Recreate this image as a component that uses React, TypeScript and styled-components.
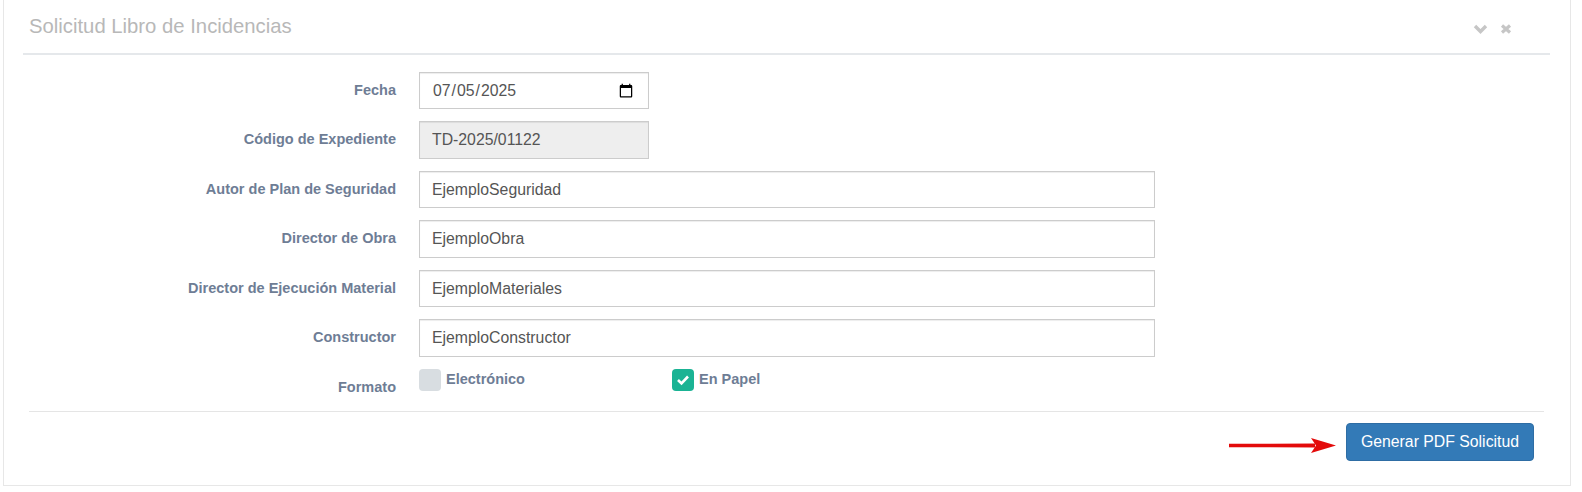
import React from "react";
import styled, { createGlobalStyle } from "styled-components";

const GlobalStyle = createGlobalStyle`
  body {
    margin: 0;
    background: #ffffff;
    font-family: "Liberation Sans", Arial, sans-serif;
  }
`;

const Panel = styled.section`
  box-sizing: border-box;
  width: 1568px;
  margin-left: 3px;
  padding: 0 20px 24px 19px;
  border: 1px solid #e7e7e7;
  border-top: none;
  background: #ffffff;
`;

const Header = styled.div`
  box-sizing: border-box;
  display: flex;
  justify-content: space-between;
  align-items: flex-start;
  height: 55px;
  padding: 15px 38px 0 6px;
  border-bottom: 2px solid #e5e8eb;
`;

const Title = styled.h5`
  margin: 0;
  font-size: 20.3px;
  font-weight: normal;
  color: #b8b8b8;
`;

const Tools = styled.div`
  display: flex;
  align-items: center;
  gap: 12px;
  margin-top: 9px;
`;

const Form = styled.div`
  display: flex;
  flex-direction: column;
  gap: 12.1px;
  margin-top: 17px;
`;

const Row = styled.div`
  display: grid;
  grid-template-columns: 373px 1fr;
  column-gap: 23px;
`;

const Label = styled.label`
  padding-top: 7.7px;
  text-align: right;
  font-size: 14.5px;
  line-height: 20.4px;
  font-weight: bold;
  color: #6e7d95;
`;

const Input = styled.input<{ $wide?: boolean }>`
  box-sizing: border-box;
  width: ${(p) => (p.$wide ? "736px" : "230px")};
  height: 37.4px;
  padding: 0 12px;
  border: 1px solid #cccccc;
  border-radius: 0;
  box-shadow: inset 0 1px 1px rgba(0, 0, 0, 0.075);
  font-family: "Liberation Sans", Arial, sans-serif;
  font-size: 15.8px;
  color: #555555;
  background: ${(p) => (p.readOnly ? "#eeeeee" : "#ffffff")};
  outline: none;
`;

const Options = styled.div`
  display: grid;
  grid-template-columns: 253px 253px;
`;

const Option = styled.div`
  display: flex;
  align-items: flex-start;
  gap: 5px;
`;

const Box = styled.span<{ $checked?: boolean }>`
  display: flex;
  align-items: center;
  justify-content: center;
  width: 22px;
  height: 22px;
  border-radius: 4px;
  background: ${(p) => (p.$checked ? "#1ab394" : "#d8dde1")};
`;

const OptionText = styled.span`
  font-size: 14.5px;
  line-height: 20.4px;
  font-weight: bold;
  color: #6e7d95;
`;

const Separator = styled.hr`
  margin: 14px 6px 0 6px;
  border: none;
  border-top: 1px solid #e5e5e5;
`;

const Footer = styled.div`
  display: flex;
  justify-content: flex-end;
  align-items: center;
  gap: 10px;
  margin-top: 11px;
  padding-right: 16px;
`;

const Arrow = styled.svg`
  margin-top: 7px;
`;

const Button = styled.button`
  box-sizing: border-box;
  height: 38px;
  padding: 0 14px;
  border: 1px solid #2e6da4;
  border-radius: 4px;
  background: #337ab7;
  color: #ffffff;
  font-family: "Liberation Sans", Arial, sans-serif;
  font-size: 15.8px;
  cursor: pointer;
`;

const fields = [
  { label: "Autor de Plan de Seguridad", value: "EjemploSeguridad" },
  { label: "Director de Obra", value: "EjemploObra" },
  { label: "Director de Ejecución Material", value: "EjemploMateriales" },
  { label: "Constructor", value: "EjemploConstructor" },
];

function App() {
  return (
    <>
      <GlobalStyle />
      <Panel>
        <Header>
          <Title>Solicitud Libro de Incidencias</Title>
          <Tools>
            <svg width="15" height="10" viewBox="0 0 15 10">
              <polyline points="2,2 7.5,7.5 13,2" fill="none" stroke="#c6c6c6" strokeWidth="3.4" />
            </svg>
            <svg width="12" height="10" viewBox="0 0 12 10">
              <path d="M2 1.5 L10 8.5 M10 1.5 L2 8.5" stroke="#c6c6c6" strokeWidth="3.2" />
            </svg>
          </Tools>
        </Header>

        <Form>
          <Row>
            <Label>Fecha</Label>
            <div>
              <Input type="date" defaultValue="2025-07-05" />
            </div>
          </Row>
          <Row>
            <Label>Código de Expediente</Label>
            <div>
              <Input type="text" readOnly value="TD-2025/01122" />
            </div>
          </Row>
          {fields.map((f) => (
            <Row key={f.label}>
              <Label>{f.label}</Label>
              <div>
                <Input $wide type="text" defaultValue={f.value} />
              </div>
            </Row>
          ))}
          <Row>
            <Label>Formato</Label>
            <Options>
              <Option>
                <Box />
                <OptionText>Electrónico</OptionText>
              </Option>
              <Option>
                <Box $checked>
                  <svg width="14" height="12" viewBox="0 0 14 12">
                    <polyline points="2,6 5.5,9.5 12,2.5" fill="none" stroke="#ffffff" strokeWidth="2.6" />
                  </svg>
                </Box>
                <OptionText>En Papel</OptionText>
              </Option>
            </Options>
          </Row>
        </Form>

        <Separator />

        <Footer>
          <Arrow width="107" height="17" viewBox="0 0 107 17">
            <path d="M0 6.8 L86 6.5 L86 10.5 L0 10.2 Z" fill="#e30b0b" />
            <polygon points="82,1 107,8.5 82,16 87,8.5" fill="#e30b0b" />
          </Arrow>
          <Button>Generar PDF Solicitud</Button>
        </Footer>
      </Panel>
    </>
  );
}

export default App;
